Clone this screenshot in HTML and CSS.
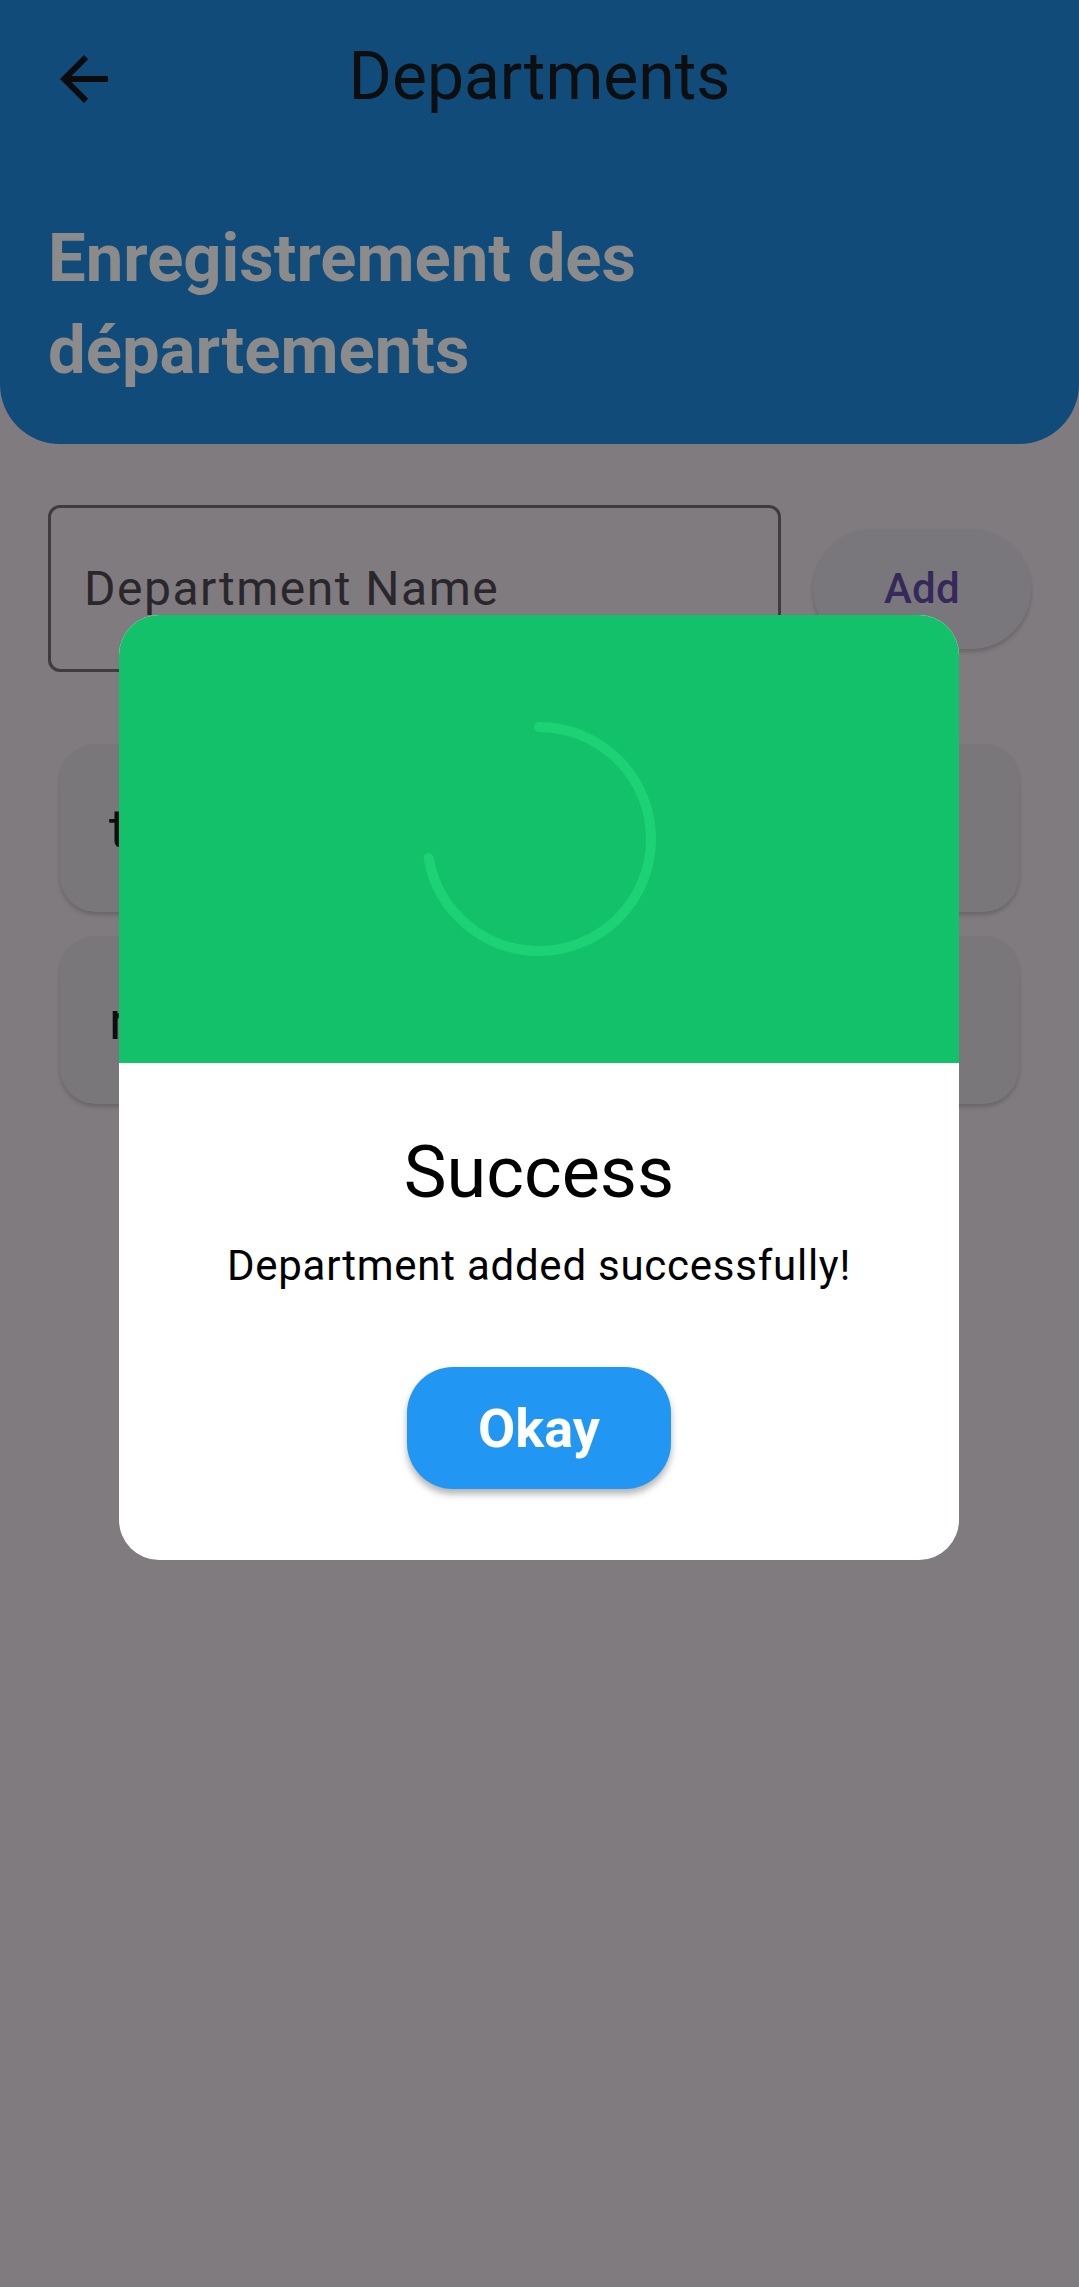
FILE: index.html
```html
<!DOCTYPE html>
<html lang="fr">
<head>
<meta charset="utf-8">
<title>Departments</title>
<link rel="stylesheet" href="styles.css">
</head>
<body>
<div class="screen">
  <header class="top">
    <div class="appbar">
      <button class="back" aria-label="Back">
        <svg viewBox="0 0 24 24" width="72" height="72"><path d="M20 11H7.83l5.59-5.59L12 4l-8 8 8 8 1.41-1.41L7.83 13H20v-2z" fill="#0b0b0c"/></svg>
      </button>
      <h1 class="title">Departments</h1>
      <span class="spacer"></span>
    </div>
    <h2 class="heading">Enregistrement des<br>départements</h2>
  </header>

  <main class="content">
    <div class="form-row">
      <div class="field"><span class="label">Department Name</span></div>
      <button class="add">Add</button>
    </div>
    <ul class="list">
      <li class="card">test</li>
      <li class="card">rh</li>
    </ul>
  </main>

  <div class="dialog" role="dialog">
    <div class="dialog-hero">
      <svg class="spinner" viewBox="0 0 234 234" width="234" height="234">
        <circle cx="117" cy="117" r="112" fill="none" stroke="#1dd275" stroke-width="10" stroke-linecap="round" stroke-dasharray="508 1000" transform="rotate(-90 117 117)"/>
      </svg>
    </div>
    <div class="dialog-body">
      <h3 class="dialog-title">Success</h3>
      <p class="dialog-msg">Department added successfully!</p>
      <button class="okay">Okay</button>
    </div>
  </div>
</div>
</body>
</html>
```
FILE: styles.css
```css
* { box-sizing: border-box; }
html, body { margin: 0; padding: 0; }
body {
  background: #7f7b7f;
  font-family: Roboto, "Noto Sans", sans-serif;
  width: 1079px;
  min-height: 2287px;
}
.screen { position: relative; min-height: 2287px; }

.top {
  background: #114b79;
  border-radius: 0 0 60px 60px;
  padding-bottom: 48px;
}
.appbar {
  height: 158px;
  display: grid;
  grid-template-columns: 1fr auto 1fr;
  align-items: center;
}
.back {
  justify-self: start;
  margin-left: 48px;
  width: 72px; height: 72px;
  padding: 0; border: 0; background: none;
  display: flex;
}
.title {
  margin: 0 0 5px 0;
  font-size: 66px;
  font-weight: 400;
  color: #0d0e10;
}
.heading {
  margin: 54px 0 0 0;
  padding-left: 48px;
  font-size: 67px;
  line-height: 92px;
  font-weight: 700;
  color: #8b8b8c;
}

.content { padding: 61px 48px 0; }
.form-row { display: flex; align-items: center; gap: 32px; }
.field {
  flex: 1;
  height: 167px;
  border: 3px solid #3f3c41;
  border-radius: 12px;
  display: flex;
  align-items: center;
  padding-left: 33px;
}
.label {
  font-size: 48px;
  letter-spacing: 1.5px;
  color: #2a272c;
}
.add {
  width: 218px; height: 120px;
  border: 0;
  border-radius: 60px;
  background: #7a777c;
  box-shadow: 0 3px 4px rgba(0,0,0,0.18);
  font-family: Roboto, sans-serif;
  font-size: 42px;
  font-weight: 500;
  letter-spacing: 0.3px;
  color: #34295a;
}

.list {
  list-style: none;
  margin: 72px 0 0;
  padding: 0 12px;
  display: flex;
  flex-direction: column;
  gap: 24px;
}
.card {
  height: 168px;
  border-radius: 36px;
  background: #7a777b;
  box-shadow: 0 3px 4px rgba(0,0,0,0.18);
  display: flex;
  align-items: center;
  padding-left: 49px;
  font-size: 54px;
  color: #0e0d0f;
}

.dialog {
  position: absolute;
  left: 119px;
  top: 615px;
  width: 840px;
  border-radius: 40px;
  overflow: hidden;
  background: #ffffff;
}
.dialog-hero {
  height: 448px;
  background: #13c16a;
  display: flex;
  align-items: center;
  justify-content: center;
}
.dialog-body {
  display: flex;
  flex-direction: column;
  align-items: center;
  padding: 67px 0 71px;
}
.dialog-title {
  margin: 0;
  font-size: 72px;
  font-weight: 400;
  color: #000;
}
.dialog-msg {
  margin: 26px 0 0;
  font-size: 42px;
  letter-spacing: 0.75px;
  color: #000;
}
.okay {
  margin-top: 77px;
  width: 264px;
  height: 122px;
  border: 0;
  border-radius: 46px;
  background: #2196f3;
  box-shadow: 0 5px 7px rgba(0,0,0,0.3);
  font-family: Roboto, sans-serif;
  font-size: 54px;
  font-weight: 700;
  color: #ffffff;
}
```
